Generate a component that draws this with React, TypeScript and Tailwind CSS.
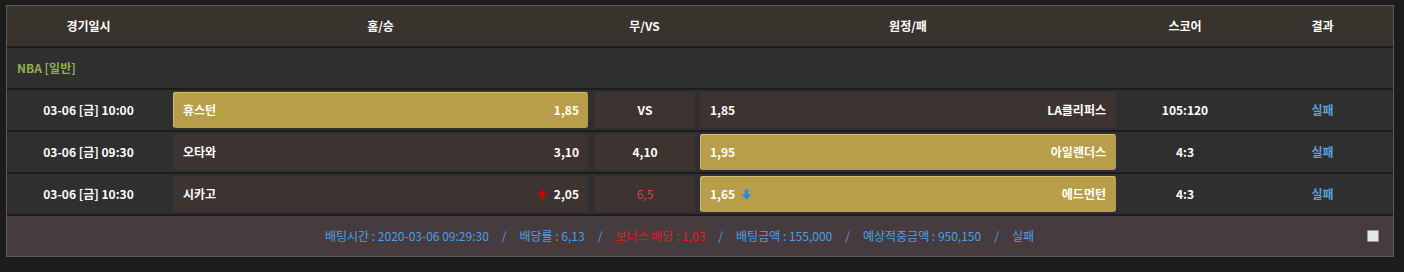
import React from "react";

type Game = {
    date: string;
    home: string;
    homeOdds: string;
    draw: string;
    away: string;
    awayOdds: string;
    score: string;
    pick: "home" | "away";
    homeUp?: boolean;
    awayDown?: boolean;
    drawRed?: boolean;
};

const games: Game[] = [
    { date: "03-06 [금] 10:00", home: "휴스턴", homeOdds: "1,85", draw: "VS", away: "LA클리퍼스", awayOdds: "1,85", score: "105:120", pick: "home" },
    { date: "03-06 [금] 09:30", home: "오타와", homeOdds: "3,10", draw: "4,10", away: "아일랜더스", awayOdds: "1,95", score: "4:3", pick: "away" },
    { date: "03-06 [금] 10:30", home: "시카고", homeOdds: "2,05", draw: "6,5", away: "에드먼턴", awayOdds: "1,65", score: "4:3", pick: "away", homeUp: true, awayDown: true, drawRed: true },
];

const picked = "bg-[#b89e48] shadow-[inset_1px_1px_0_#d3bd70]";
const plain = "bg-[#3d3432]";

const ArrowUp = () => (
    <svg width="11" height="11" viewBox="0 0 10 10" className="mr-[6px]">
        <path d="M5 0.5 L9.5 5 H6.6 V9.5 H3.4 V5 H0.5 Z" fill="#d00000" />
    </svg>
);

const ArrowDown = () => (
    <svg width="11" height="11" viewBox="0 0 10 10" className="ml-[6px]">
        <path d="M5 9.5 L9.5 5 H6.6 V0.5 H3.4 V5 H0.5 Z" fill="#1d8fe8" />
    </svg>
);

const Sep = () => <span className="mx-[13px]">/</span>;

const App = () => {
    return (
        <div className="w-[1404px] h-[272px] bg-[#1c1c1c] pt-[5px] pl-[6px] font-['Noto_Sans_CJK_KR','Noto_Sans',sans-serif] text-[12px]">
            <div className="w-[1388px] border border-[#5c5c5c] bg-[#1c1c1c] flex flex-col gap-[2px]">
                {/* header */}
                <div className="h-[40px] bg-[#39332d] flex items-center text-white font-bold">
                    <div className="w-[163px] text-center">경기일시</div>
                    <div className="w-[421px] text-center">홈/승</div>
                    <div className="w-[107px] text-center">무/VS</div>
                    <div className="w-[420px] text-center">원정/패</div>
                    <div className="w-[134px] text-center">스코어</div>
                    <div className="flex-1 text-center">결과</div>
                </div>

                <div className="h-[40px] bg-[#2f2f2f] flex items-center pl-[10px] text-[#8fae4f] font-bold">NBA [일반]</div>

                {games.map((g, i) => (
                    <div key={i} className="h-[40px] bg-[#2f2f2f] flex items-center text-white font-bold">
                        <div className="w-[163px] text-center">{g.date}</div>
                        <div className="w-[421px] pl-[3px] pr-[3px]">
                            <div className={`h-[36px] rounded-[3px] flex items-center justify-between pl-[10px] pr-[9px] ${g.pick === "home" ? picked : plain}`}>
                                <span>{g.home}</span>
                                <span className="flex items-center">{g.homeUp && <ArrowUp />}{g.homeOdds}</span>
                            </div>
                        </div>
                        <div className="w-[107px] pl-[4px] pr-[3px]">
                            <div className={`h-[36px] rounded-[3px] flex items-center justify-center ${plain} ${g.drawRed ? "text-[#d9443f] font-normal" : ""}`}>
                                {g.draw}
                            </div>
                        </div>
                        <div className="w-[420px] px-[2px]">
                            <div className={`h-[36px] rounded-[3px] flex items-center justify-between pl-[10px] pr-[10px] ${g.pick === "away" ? picked : plain}`}>
                                <span className="flex items-center">{g.awayOdds}{g.awayDown && <ArrowDown />}</span>
                                <span>{g.away}</span>
                            </div>
                        </div>
                        <div className="w-[134px] text-center">{g.score}</div>
                        <div className="flex-1 text-center text-[#5b9fdc]">실패</div>
                    </div>
                ))}

                <div className="h-[40px] bg-[#463b3f] flex items-center">
                    <div className="flex-1 text-center text-[#4d9fe3]">
                        배팅시간 : 2020-03-06 09:29:30
                        <Sep />
                        배당률 : 6,13
                        <Sep />
                        <span className="text-[#e41c1c]">보너스 배당 : 1,03</span>
                        <Sep />
                        배팅금액 : 155,000
                        <Sep />
                        예상적중금액 : 950,150
                        <Sep />
                        실패
                    </div>
                    <div className="w-[41px] flex justify-center">
                        <div className="w-[12px] h-[12px] bg-[#e6e6e6] border border-[#9a9a9a] rounded-[1px]" />
                    </div>
                </div>
            </div>
        </div>
    );
};

export default App;
